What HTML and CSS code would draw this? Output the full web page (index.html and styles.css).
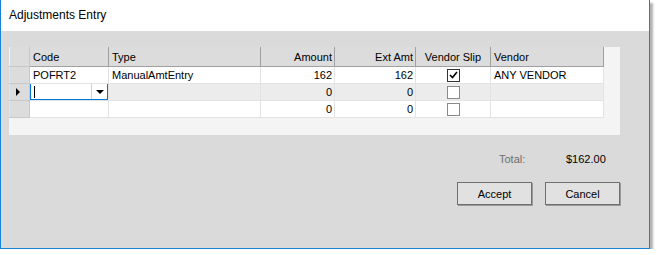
FILE: index.html
```html
<!doctype html>
<html lang="en">
    <head>
        <meta charset="UTF-8" />
        <title>Adjustments Entry</title>
        <link rel="stylesheet" href="styles.css">
    </head>
    <body>
        <div class="window">
            <div class="title-bar">Adjustments Entry</div>
            <div class="client">
                <div class="grid-panel">
                    <table class="grid">
                        <colgroup>
                            <col class="c-rowhead">
                            <col class="c-code">
                            <col class="c-type">
                            <col class="c-amount">
                            <col class="c-ext">
                            <col class="c-slip">
                            <col class="c-vendor">
                        </colgroup>
                        <thead>
                            <tr>
                                <th class="rowhead"></th>
                                <th>Code</th>
                                <th>Type</th>
                                <th class="num">Amount</th>
                                <th class="num">Ext Amt</th>
                                <th class="center">Vendor Slip</th>
                                <th>Vendor</th>
                            </tr>
                        </thead>
                        <tbody>
                            <tr>
                                <td class="rowhead"></td>
                                <td>POFRT2</td>
                                <td>ManualAmtEntry</td>
                                <td class="num">162</td>
                                <td class="num">162</td>
                                <td class="center"><span class="check checked"><svg width="9" height="8" viewBox="0 0 9 8"><path d="M1 4 L3.5 6.5 L8 1" fill="none" stroke="#000" stroke-width="1.6"/></svg></span></td>
                                <td>ANY VENDOR</td>
                            </tr>
                            <tr class="current">
                                <td class="rowhead"><span class="pointer"></span></td>
                                <td class="editing">
                                    <div class="combo">
                                        <span class="caret"></span>
                                        <span class="drop"><span class="arrow"></span></span>
                                    </div>
                                </td>
                                <td></td>
                                <td class="num">0</td>
                                <td class="num">0</td>
                                <td class="center"><span class="check"></span></td>
                                <td></td>
                            </tr>
                            <tr>
                                <td class="rowhead"></td>
                                <td></td>
                                <td></td>
                                <td class="num">0</td>
                                <td class="num">0</td>
                                <td class="center"><span class="check"></span></td>
                                <td></td>
                            </tr>
                        </tbody>
                    </table>
                </div>

                <div class="total-row">
                    <span class="total-label">Total:</span>
                    <span class="total-value">$162.00</span>
                </div>

                <div class="buttons">
                    <button class="btn">Accept</button>
                    <button class="btn">Cancel</button>
                </div>
            </div>
        </div>
    </body>
</html>
```

FILE: styles.css
```css
body {
    margin: 0;
    background: #fff;
    font-family: "Liberation Sans", Arial, sans-serif;
}

.window {
    width: 650px;
    height: 249px;
    box-sizing: border-box;
    border: 1px solid #1883d7;
    border-top: none;
    background: #dadada;
    box-shadow: 3px 3px 2px rgba(0, 0, 0, 0.3);
    display: flex;
    flex-direction: column;
}

.title-bar {
    height: 31px;
    background: #fff;
    font-size: 12px;
    color: #000;
    line-height: 31px;
    padding-left: 8px;
    box-sizing: border-box;
}

.client {
    flex: 1;
    display: flex;
    flex-direction: column;
    padding: 16px 0 0 8px;
}

.grid-panel {
    width: 611px;
    height: 88px;
    background: #f4f4f4;
}

.grid {
    border-collapse: collapse;
    table-layout: fixed;
    width: 594px;
    font-size: 11px;
    color: #000;
}

.c-rowhead { width: 20px; }
.c-code { width: 79px; }
.c-type { width: 152px; }
.c-amount { width: 74px; }
.c-ext { width: 81px; }
.c-slip { width: 75px; }
.c-vendor { width: 113px; }

.grid th {
    height: 19px;
    background: #dcdcdc;
    font-weight: normal;
    text-align: left;
    padding: 0 3px;
    border-right: 1px solid #a0a0a0;
    border-bottom: 1px solid #a0a0a0;
    white-space: nowrap;
    overflow: hidden;
}

.grid td {
    height: 16px;
    padding: 0 3px;
    border: 1px solid #e3e3e3;
    border-top: none;
    background: #fff;
    white-space: nowrap;
    overflow: hidden;
}

.grid tr.current td {
    background: #ececec;
}

.grid .rowhead,
.grid tr.current td.rowhead {
    background: #dcdcdc;
    border-right: 1px solid #c8c8c8;
    border-bottom: 1px solid #c8c8c8;
    padding: 0;
}

.grid .num {
    text-align: right;
    padding-right: 2px;
}

.grid .center {
    text-align: center;
    padding: 0;
}

.pointer {
    display: block;
    margin-left: 6px;
    width: 0;
    height: 0;
    border-top: 4px solid transparent;
    border-bottom: 4px solid transparent;
    border-left: 4px solid #000;
}

.grid td.editing {
    padding: 0;
}

.combo {
    height: 17px;
    margin-top: -1px;
    box-sizing: border-box;
    border: 1px solid #0078d7;
    background: #fff;
    display: flex;
    align-items: center;
}

.caret {
    width: 1px;
    height: 12px;
    background: #000;
    margin-left: 3px;
}

.drop {
    margin-left: auto;
    width: 15px;
    height: 100%;
    border-left: 1px solid #d0d0d0;
    display: flex;
    align-items: center;
    justify-content: center;
}

.arrow {
    width: 0;
    height: 0;
    border-left: 4px solid transparent;
    border-right: 4px solid transparent;
    border-top: 4px solid #000;
}

.check {
    display: inline-flex;
    align-items: center;
    justify-content: center;
    width: 13px;
    height: 13px;
    box-sizing: border-box;
    border: 1px solid #8a8a8a;
    background: #fff;
    vertical-align: middle;
}

.check.checked {
    border-color: #333;
}

.total-row {
    display: flex;
    margin-top: 18px;
    padding-left: 490px;
    font-size: 11px;
    line-height: 13px;
}

.total-label {
    width: 67px;
    color: #6d6d6d;
}

.total-value {
    color: #000;
}

.buttons {
    display: flex;
    justify-content: flex-end;
    gap: 13px;
    margin-top: 16px;
    padding-right: 29px;
}

.btn {
    width: 75px;
    height: 23px;
    font-family: "Liberation Sans", Arial, sans-serif;
    font-size: 11px;
    color: #000;
    background: #e1e1e1;
    border: 1px solid #6f6f6f;
    box-shadow: 1px 1px 0 #9a9a9a;
    padding: 0;
}
```
